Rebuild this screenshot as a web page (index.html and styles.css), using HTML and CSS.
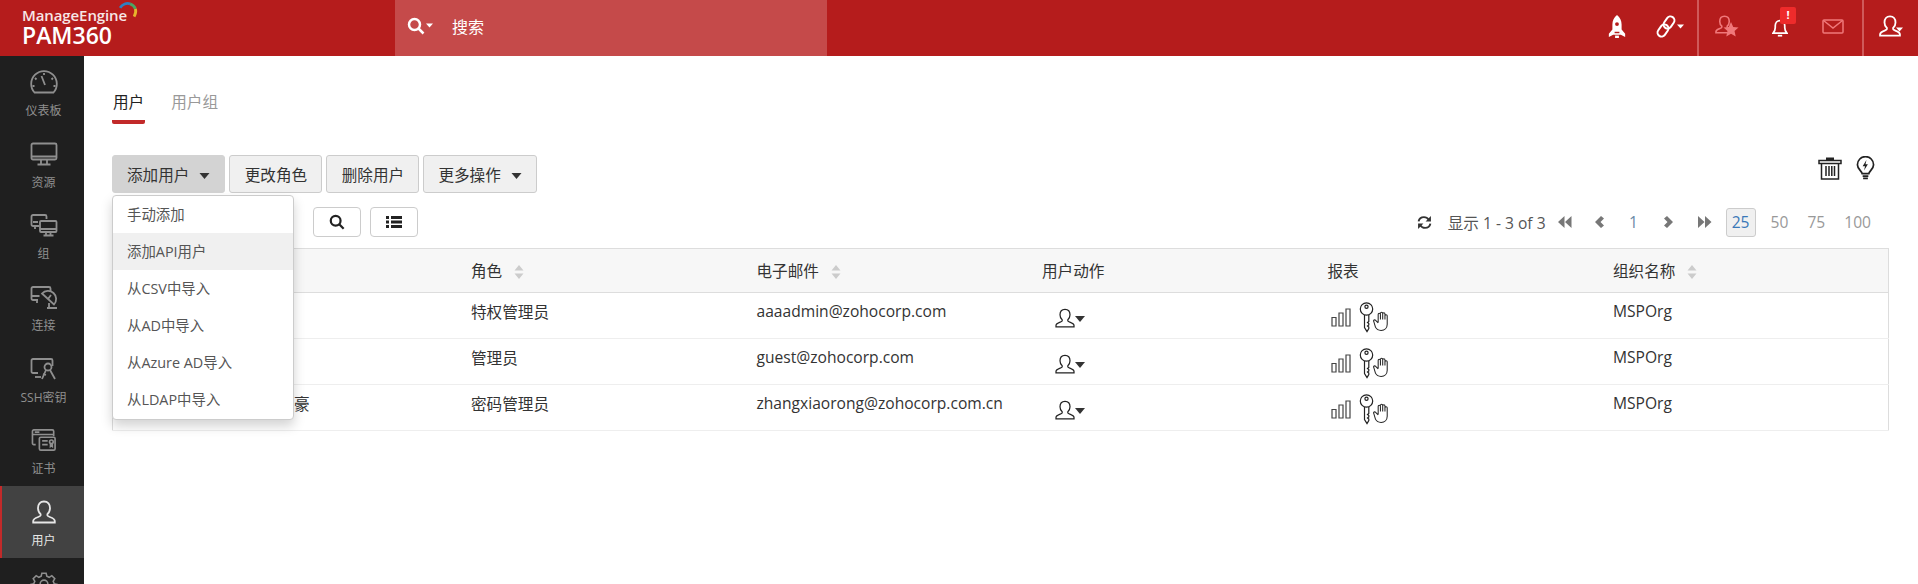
FILE: index.html
```html
<!DOCTYPE html>
<html lang="zh-CN">
<head>
  <meta charset="UTF-8">
  <title>PAM360 用户</title>
  <link rel="stylesheet" href="styles.css">
</head>
<body>
  <!-- Icon set -->
  <svg class="icon-defs" xmlns="http://www.w3.org/2000/svg">
    <symbol id="i-user" viewBox="0 0 24 24"><path d="M12 1.5c-3.9 0-6 2.900-6 6.600 0 2.800 1 4.700 2.600 6v1.500c0 1.300-7.400 1.900-7.400 5.400v1.500h21.600V21c0-3.500-7.400-4.100-7.400-5.400v-1.500c1.600-1.300 2.600-3.200 2.600-6 0-3.700-2.100-6.600-6-6.600z"/></symbol>
    <symbol id="i-caret" viewBox="0 0 10 6"><path class="solid" d="M0 0h10L5 6z"/></symbol>
    <symbol id="i-search" viewBox="0 0 18 18"><circle cx="7.5" cy="7.5" r="5.5"/><path d="M11.5 11.5l5 5"/></symbol>
    <symbol id="i-gauge" viewBox="0 0 28 24"><path d="M4.5 22.5A12.8 12.8 0 1 1 23.5 22.5z"/><path d="M11.5 6l3.500 9M14 3v2M5 8l1.500 1.500M23 8l-1.500 1.500M2.500 16h2M25.500 16h-2"/></symbol>
    <symbol id="i-monitor" viewBox="0 0 28 24"><rect x="1.5" y="1.5" width="25" height="16" rx="1.5"/><path d="M1.5 14.5h25M11 18v3.500M17 18v3.500M7.500 22.500h13"/></symbol>
    <symbol id="i-group" viewBox="0 0 28 24"><path d="M9 13H3a1.500 1.500 0 0 1-1.500-1.500v-8A1.500 1.500 0 0 1 3 2h12a1.500 1.500 0 0 1 1.500 1.500V6"/><path d="M3 9h5M5 13v3"/><rect x="10" y="8" width="16.5" height="11" rx="1"/><path d="M10 16h16.500M16 19v3M20.500 19v3M13.500 22.500h10"/></symbol>
    <symbol id="i-connect" viewBox="0 0 28 24"><path d="M8 15H3a1.500 1.500 0 0 1-1.500-1.500v-10A1.500 1.500 0 0 1 3 2h16a1.500 1.500 0 0 1 1.500 1.500V7"/><path d="M1.500 11h8M7 15v3"/><path class="dish" d="M12 8.500L24 19.500A8 8 0 0 0 12 8.500z"/><path d="M18 14l3-4M17 23h10M19 18v5"/></symbol>
    <symbol id="i-ssh" viewBox="0 0 28 24"><path d="M8 16H3a1.500 1.500 0 0 1-1.500-1.500v-11A1.500 1.500 0 0 1 3 2h18a1.500 1.500 0 0 1 1.500 1.500V9"/><path d="M5 20h6"/><circle cx="18" cy="10" r="3.5"/><path d="M16 13l-4 9M20 13l5 9M13 17l3 1"/></symbol>
    <symbol id="i-cert" viewBox="0 0 28 26"><path d="M5 18H3a1.500 1.500 0 0 1-1.500-1.500v-13A1.500 1.500 0 0 1 3 2h20a1.500 1.500 0 0 1 1.500 1.500V9"/><path d="M1.500 7h23M4 4.500h5"/><rect x="9" y="10" width="17" height="14" rx="1.5"/><path d="M12 14h6M12 18h6"/><circle cx="22" cy="15" r="2"/><path d="M21 17v3l1-.8 1 .8v-3"/></symbol>
    <symbol id="i-gear" viewBox="0 0 28 28"><path d="M11.500 1.500h5l.8 3.500 2.700 1.200 3.100-1.900 3.500 3.500-1.900 3.100 1.200 2.700 3.500.8v5l-3.500.8-1.200 2.700 1.900 3.100-3.500 3.500-3.100-1.900-2.700 1.200-.8 3.500h-5l-.8-3.500-2.700-1.200-3.100 1.900-3.500-3.500 1.900-3.100-1.200-2.700-3.500-.8v-5l3.500-.8 1.200-2.700-1.900-3.100 3.500-3.500 3.100 1.900 2.700-1.200z"/><circle cx="14" cy="14" r="4.5"/></symbol>
    <symbol id="i-rocket" viewBox="0 0 18 24"><path class="solid" d="M9 0c3.200 2.500 4.800 6 4.800 10v5l3.700 4.500V23l-4.500-2.500H5L.5 23v-3.500L4.200 15v-5C4.200 6 5.800 2.500 9 0z"/><circle class="hole" cx="9" cy="9.5" r="2"/><path class="hole" d="M6.500 17.500h5V19h-5z"/><path class="solid" d="M7 21.500h4V24H7z"/></symbol>
    <symbol id="i-link" viewBox="0 0 20 23"><rect x="9" y="1" width="8" height="13" rx="4" transform="rotate(35 13 7.500)"/><rect x="3" y="9" width="8" height="13" rx="4" transform="rotate(35 7 15.500)"/></symbol>
    <symbol id="i-star" viewBox="0 0 14 14"><path class="solid" d="M7 0l2.100 4.700 4.900.5-3.700 3.300 1.100 5L7 11l-4.400 2.500 1.100-5L0 5.200l4.900-.5z"/></symbol>
    <symbol id="i-bell" viewBox="0 0 18 22"><path d="M1 17.500h16c-1.500-1.500-2.500-3-2.500-6.500V9c0-3.500-2.300-6-5.500-6S3.500 5.500 3.500 9v2c0 3.500-1 5-2.500 6.500z"/><path d="M6.500 20.500h5"/></symbol>
    <symbol id="i-mail" viewBox="0 0 22 15"><rect x="1" y="1" width="20" height="13" rx="1"/><path d="M1.500 1.500L11 9l9.500-7.500"/></symbol>
    <symbol id="i-list" viewBox="0 0 16 14"><path class="solid" d="M0 1h3v3H0zM5 1h11v3H5zM0 5.500h3v3H0zM5 5.500h11v3H5zM0 10h3v3H0zM5 10h11v3H5z"/></symbol>
    <symbol id="i-trash" viewBox="0 0 24 24"><path d="M1 4.500h22V7.500H1zM3.500 7.500V23h17V7.500M8 10v10M11 10v10M13.800 10v10M16.500 10v10"/><path class="solid" d="M8 1.500h8v3H8z"/></symbol>
    <symbol id="i-bulb" viewBox="0 0 20 26"><path d="M6.500 18.500C6 15.500 1.500 13.500 1.500 9a8.500 8.500 0 0 1 17 0c0 4.500-4.500 6.500-5 9.500z"/><path d="M7 21h6M7.500 23.500h5"/><path class="solid" d="M11 4L7 10.500h2.500L8.500 15l4-6.500h-2.500z"/></symbol>
    <symbol id="i-refresh" viewBox="0 0 14 14"><path d="M1.500 6C2 3.500 4 2 6.500 2c2 0 3.500 1 4.500 2.500M12.500 8c-.5 2.500-2.500 4-5 4-2 0-3.500-1-4.500-2.500"/><path class="solid" d="M13 1v5H8zM1 13V8h5z"/></symbol>
    <symbol id="i-first" viewBox="0 0 14 12"><path class="solid" d="M6.500 0v12L0 6zM13.500 0v12L7 6z"/></symbol>
    <symbol id="i-prev" viewBox="0 0 9 12"><path class="solid" d="M6 0l3 2.500L5.500 6 9 9.500 6 12 0 6z"/></symbol>
    <symbol id="i-next" viewBox="0 0 9 12"><path class="solid" d="M3 0L0 2.500 3.500 6 0 9.500 3 12l6-6z"/></symbol>
    <symbol id="i-last" viewBox="0 0 14 12"><path class="solid" d="M0 0v12l6.500-6zM7 0v12l6.500-6z"/></symbol>
    <symbol id="i-sort" viewBox="0 0 10 14"><path class="solid" d="M5 0l4.500 5.500h-9zM5 14L.5 8.500h9z"/></symbol>
    <symbol id="i-bars" viewBox="0 0 20 19"><path d="M1 9.500h4V18H1zM8 5h4v13H8zM15 1h4v17h-4z"/></symbol>
    <symbol id="i-key" viewBox="0 0 15 31"><circle cx="7.5" cy="7" r="6.2"/><circle cx="7.5" cy="4.8" r="1.6"/><path d="M5.500 13v12.500l2.500 4 1.800-3v-1.500l-1.300-1 1.300-1v-1.500l-1.300-1 1.300-1V13"/></symbol>
    <symbol id="i-hand" viewBox="0 0 17 21"><path d="M5.500 12V3.500a1.200 1.200 0 0 1 2.400 0V9M7.900 2.500a1.200 1.200 0 0 1 2.400 0V9M10.300 3a1.200 1.200 0 0 1 2.400 0V9M12.700 5a1.200 1.200 0 0 1 2.400 0v9c0 3.800-2.600 6.500-6.500 6.500-3 0-5-1.500-6-3.500L.8 11c-.6-1.300 1-2.300 2-1.200l2.700 2.700"/></symbol>
  </svg>

  <!-- Top bar -->
  <header class="topbar">
    <div class="brand">
      <div class="brand-me">ManageEngine
        <svg class="brand-arc" viewBox="0 0 18 14">
          <path d="M1 5C3 1.500 7 .5 10 1.500" stroke="#2f7fc1"/>
          <path d="M10 1.500c2.500.8 4 2.500 4.800 4.500" stroke="#4aa564"/>
          <path d="M14.800 6c.6 2.200.2 4.500-1.200 7" stroke="#e8b32c"/>
        </svg>
      </div>
      <div class="brand-name">PAM360</div>
    </div>
    <div class="global-search">
      <svg class="ic search-ic"><use href="#i-search"/></svg>
      <svg class="ic tiny-caret"><use href="#i-caret"/></svg>
      <span class="search-label">搜索</span>
    </div>
    <div class="top-actions">
      <div class="top-cell"><svg class="ic rocket"><use href="#i-rocket"/></svg></div>
      <div class="top-cell"><svg class="ic link"><use href="#i-link"/></svg><svg class="ic tiny-caret"><use href="#i-caret"/></svg></div>
      <div class="top-sep"></div>
      <div class="top-cell wide dim">
        <svg class="ic top-user star-user"><use href="#i-user"/></svg>
        <svg class="ic star"><use href="#i-star"/></svg>
      </div>
      <div class="top-cell wide">
        <svg class="ic bell"><use href="#i-bell"/></svg>
        <span class="badge">!</span>
      </div>
      <div class="top-cell wide dim"><svg class="ic mail"><use href="#i-mail"/></svg></div>
      <div class="top-sep"></div>
      <div class="top-cell wide"><svg class="ic top-user"><use href="#i-user"/></svg><svg class="ic tiny-caret user-caret"><use href="#i-caret"/></svg></div>
    </div>
  </header>

  <div class="layout">
    <!-- Side menu -->
    <nav class="sidebar">
      <a class="side-item"><svg class="ic"><use href="#i-gauge"/></svg><span>仪表板</span></a>
      <a class="side-item"><svg class="ic"><use href="#i-monitor"/></svg><span>资源</span></a>
      <a class="side-item"><svg class="ic"><use href="#i-group"/></svg><span>组</span></a>
      <a class="side-item"><svg class="ic"><use href="#i-connect"/></svg><span>连接</span></a>
      <a class="side-item"><svg class="ic"><use href="#i-ssh"/></svg><span>SSH密钥</span></a>
      <a class="side-item"><svg class="ic"><use href="#i-cert"/></svg><span>证书</span></a>
      <a class="side-item active"><svg class="ic"><use href="#i-user"/></svg><span>用户</span></a>
      <a class="side-item"><svg class="ic"><use href="#i-gear"/></svg></a>
    </nav>

    <main class="content">
      <div class="tabs">
        <a class="tab active">用户</a>
        <a class="tab">用户组</a>
      </div>

      <div class="toolbar">
        <button class="btn open">添加用户<svg class="ic btn-caret"><use href="#i-caret"/></svg></button>
        <button class="btn">更改角色</button>
        <button class="btn">删除用户</button>
        <button class="btn">更多操作<svg class="ic btn-caret"><use href="#i-caret"/></svg></button>
        <div class="tool-icons">
          <svg class="ic trash"><use href="#i-trash"/></svg>
          <svg class="ic bulb"><use href="#i-bulb"/></svg>
        </div>
        <ul class="dropdown">
          <li>手动添加</li>
          <li class="hover">添加API用户</li>
          <li>从CSV中导入</li>
          <li>从AD中导入</li>
          <li>从Azure AD导入</li>
          <li>从LDAP中导入</li>
        </ul>
      </div>

      <div class="table-tools">
        <button class="btn-small"><svg class="ic"><use href="#i-search"/></svg></button>
        <button class="btn-small"><svg class="ic list"><use href="#i-list"/></svg></button>
        <div class="pager">
          <svg class="ic refresh"><use href="#i-refresh"/></svg>
          <span class="pager-text">显示 1 - 3 of 3</span>
          <svg class="ic pg first"><use href="#i-first"/></svg>
          <svg class="ic pg prev"><use href="#i-prev"/></svg>
          <span class="pg-num">1</span>
          <svg class="ic pg next"><use href="#i-next"/></svg>
          <svg class="ic pg last"><use href="#i-last"/></svg>
          <span class="size current">25</span>
          <span class="size">50</span>
          <span class="size">75</span>
          <span class="size">100</span>
        </div>
      </div>

      <table class="users">
        <thead>
          <tr>
            <th class="col-name"></th>
            <th>角色<svg class="ic sort"><use href="#i-sort"/></svg></th>
            <th>电子邮件<svg class="ic sort"><use href="#i-sort"/></svg></th>
            <th>用户动作</th>
            <th>报表</th>
            <th class="col-last">组织名称<svg class="ic sort"><use href="#i-sort"/></svg></th>
          </tr>
        </thead>
        <tbody>
          <tr>
            <td></td>
            <td>特权管理员</td>
            <td>aaaadmin@zohocorp.com</td>
            <td><div class="cell-icons"><svg class="ic act-user"><use href="#i-user"/></svg><svg class="ic act-caret"><use href="#i-caret"/></svg></div></td>
            <td><div class="cell-icons"><svg class="ic bars"><use href="#i-bars"/></svg><svg class="ic key"><use href="#i-key"/></svg><svg class="ic hand"><use href="#i-hand"/></svg></div></td>
            <td>MSPOrg</td>
          </tr>
          <tr>
            <td></td>
            <td>管理员</td>
            <td>guest@zohocorp.com</td>
            <td><div class="cell-icons"><svg class="ic act-user"><use href="#i-user"/></svg><svg class="ic act-caret"><use href="#i-caret"/></svg></div></td>
            <td><div class="cell-icons"><svg class="ic bars"><use href="#i-bars"/></svg><svg class="ic key"><use href="#i-key"/></svg><svg class="ic hand"><use href="#i-hand"/></svg></div></td>
            <td>MSPOrg</td>
          </tr>
          <tr>
            <td class="name-tail">豪</td>
            <td>密码管理员</td>
            <td>zhangxiaorong@zohocorp.com.cn</td>
            <td><div class="cell-icons"><svg class="ic act-user"><use href="#i-user"/></svg><svg class="ic act-caret"><use href="#i-caret"/></svg></div></td>
            <td><div class="cell-icons"><svg class="ic bars"><use href="#i-bars"/></svg><svg class="ic key"><use href="#i-key"/></svg><svg class="ic hand"><use href="#i-hand"/></svg></div></td>
            <td>MSPOrg</td>
          </tr>
        </tbody>
      </table>
    </main>
  </div>
</body>
</html>
```

FILE: styles.css
```css
* {
  box-sizing: border-box;
}

html, body {
  height: 100%;
}

body {
  margin: 0;
  overflow: hidden;
  background: #fff;
  color: #333;
  font-family: "Open Sans", "Noto Sans CJK SC", sans-serif;
  font-size: 14px;
}

.icon-defs {
  position: absolute;
  width: 0;
  height: 0;
}

.ic {
  display: inline-block;
  fill: none;
  stroke: currentColor;
  stroke-width: 1.5;
  flex: none;
}

.solid {
  fill: currentColor;
  stroke: none;
}

.hole {
  fill: #b51c1c;
  stroke: none;
}

.dish {
  fill: #1f1f1f;
}

/* Top bar */
.topbar {
  display: flex;
  height: 56px;
  background: #b51c1c;
  color: #fff;
}

.brand {
  width: 395px;
  padding: 7px 0 0 22px;
}

.brand-me {
  position: relative;
  width: 114px;
  font-size: 15px;
  line-height: 17px;
  font-weight: 600;
  letter-spacing: -0.1px;
  color: #f7e6e6;
}

.brand-arc {
  position: absolute;
  left: 97px;
  top: -5px;
  width: 20px;
  height: 16px;
  fill: none;
  stroke-width: 2.5;
}

.brand-name {
  margin-top: 1px;
  font-size: 23px;
  line-height: 20px;
  font-weight: 600;
}

.global-search {
  display: flex;
  align-items: center;
  width: 432px;
  padding: 0 0 5px 12px;
  background: #c54a4a;
}

.search-ic {
  width: 18px;
  height: 18px;
  stroke-width: 2.5;
}

.tiny-caret {
  width: 7px;
  height: 5px;
  margin-left: 1px;
}

.search-label {
  margin-left: 19px;
  font-size: 16px;
}

.top-actions {
  display: flex;
  margin-left: auto;
}

.top-cell {
  position: relative;
  display: flex;
  align-items: center;
  justify-content: center;
  width: 53px;
  height: 56px;
  padding-bottom: 4px;
}

.top-cell.wide {
  width: 54.33px;
}

.top-cell.dim {
  color: #f0787a;
}

.top-sep {
  width: 2px;
  background: #cf5a5a;
}

.rocket {
  width: 18px;
  height: 23px;
}

.link {
  width: 20px;
  height: 23px;
  stroke-width: 2;
}

.top-user {
  width: 22px;
  height: 22px;
  stroke-width: 2;
}

.star-user {
  width: 19px;
  height: 19px;
  margin: 0 3px 3px 0;
}

.star {
  position: absolute;
  left: 24px;
  top: 22px;
  width: 16px;
  height: 15px;
}

.bell {
  width: 16px;
  height: 19px;
  margin-top: 2px;
  stroke-width: 2;
}

.badge {
  position: absolute;
  left: 27px;
  top: 7px;
  width: 16px;
  height: 17px;
  border-radius: 2px;
  background: #ee2b2b;
  font-size: 11px;
  font-weight: 700;
  line-height: 15px;
  text-align: center;
}

.mail {
  width: 22px;
  height: 15px;
  margin-right: 4px;
}

.user-caret {
  margin: 6px 0 0 -5px;
}

/* Page */
.layout {
  display: flex;
  height: 528px;
}

.sidebar {
  width: 84px;
  background: #1f1f1f;
  color: #8f8f8f;
  overflow: hidden;
}

.side-item {
  display: flex;
  flex-direction: column;
  align-items: center;
  height: 71.67px;
  padding: 14px 0 0 3px;
  font-size: 12px;
  line-height: 16px;
}

.side-item .ic {
  width: 28px;
  height: 24px;
  margin-bottom: 9px;
  stroke-width: 1.8;
}

.side-item.active {
  background: #424242;
  border-left: 2px solid #c22a2a;
  color: #e6e6e6;
  padding-left: 1px;
}

.content {
  flex: 1;
  padding: 36px 29px 0 28px;
}

.tabs {
  display: flex;
  gap: 25px;
}

.tab {
  height: 32px;
  padding: 0 1px;
  font-size: 15.6px;
  line-height: 20px;
  color: #999;
}

.tab.active {
  color: #222;
  border-bottom: 4px solid #c22a2a;
  border-radius: 0 0 2px 2px;
}

.toolbar {
  position: relative;
  display: flex;
  gap: 4px;
  margin-top: 31px;
}

.btn {
  min-width: 93px;
  height: 38px;
  padding: 0 14px;
  border: 1px solid #ccc;
  border-radius: 3px;
  background: #f0f0f0;
  color: #333;
  font: inherit;
  font-size: 15.6px;
}

.btn.open {
  background: #d3d3d3;
  border-color: #d3d3d3;
}

.btn-caret {
  width: 11px;
  height: 6px;
  margin: 0 0 2px 10px;
  color: #333;
}

.tool-icons {
  display: flex;
  align-items: flex-start;
  gap: 14px;
  margin-left: auto;
  padding: 1px 14px 0 0;
  color: #222;
}

.trash {
  width: 24px;
  height: 24px;
}

.bulb {
  width: 19px;
  height: 25px;
  stroke-width: 1.8;
}

.dropdown {
  position: absolute;
  left: 0;
  top: 40px;
  width: 182px;
  height: 225px;
  margin: 0;
  padding: 0;
  list-style: none;
  background: #fff;
  border: 1px solid #ccc;
  border-radius: 4px;
  box-shadow: 0 6px 12px rgba(0, 0, 0, 0.175);
  color: #555;
  font-size: 14.4px;
}

.dropdown li {
  height: 37px;
  padding-left: 14px;
  line-height: 37px;
}

.dropdown .hover {
  background: #f0f0f0;
}

.table-tools {
  display: flex;
  align-items: center;
  height: 30px;
  margin-top: 14px;
  padding: 0 18px 0 201px;
}

.btn-small {
  display: flex;
  align-items: center;
  justify-content: center;
  width: 48px;
  height: 30px;
  margin-right: 9px;
  border: 1px solid #ccc;
  border-radius: 4px;
  background: #fff;
  color: #222;
}

.btn-small .ic {
  width: 16px;
  height: 16px;
  stroke-width: 2.5;
}

.btn-small .list {
  height: 14px;
}

.pager {
  display: flex;
  align-items: center;
  margin-left: auto;
  font-size: 15.6px;
  color: #555;
}

.refresh {
  width: 15px;
  height: 15px;
  margin-right: 16px;
  color: #333;
  stroke-width: 1.8;
}

.pager-text {
  margin-right: 12px;
}

.pg {
  height: 12px;
  color: #777;
}

.pg.first, .pg.last {
  width: 14px;
}

.pg.prev, .pg.next {
  width: 9px;
}

.pg.prev {
  margin-left: 23px;
}

.pg.next {
  margin-right: 25px;
}

.pg-num {
  width: 60px;
  text-align: center;
  color: #6b8aa8;
}

.size {
  margin-left: 19px;
  color: #999;
}

.size.current {
  width: 30px;
  height: 29px;
  margin-left: 14px;
  margin-right: -4px;
  border: 1px solid #ccc;
  border-radius: 3px;
  background: #f0f0f0;
  color: #3a78b8;
  line-height: 27px;
  text-align: center;
}

.users {
  width: 100%;
  margin-top: 11px;
  border: 1px solid #ddd;
  border-collapse: collapse;
  table-layout: fixed;
  font-size: 15.6px;
}

.users th {
  width: 285.5px;
  height: 44px;
  padding: 0 14px;
  background: #f7f7f7;
  border-bottom: 1px solid #ddd;
  font-weight: 400;
  text-align: left;
}

.users .col-name {
  width: 344.5px;
}

.users .col-last {
  width: auto;
}

.users td {
  height: 46px;
  padding: 7px 14px 0;
  border-bottom: 1px solid #eee;
  vertical-align: top;
  white-space: nowrap;
}

.sort {
  width: 10px;
  height: 14px;
  margin-left: 12px;
  vertical-align: -2px;
  color: #ccc;
}

.users td.name-tail {
  padding-left: 181px;
}

.cell-icons {
  display: flex;
  align-items: flex-start;
}

.act-user {
  width: 20px;
  height: 20px;
  margin: 8px 0 0 13px;
  color: #222;
}

.act-caret {
  width: 10px;
  height: 6px;
  margin-top: 16px;
  color: #333;
}

.bars {
  width: 20px;
  height: 19px;
  margin: 8px 8px 0 3px;
  color: #444;
  stroke-width: 1.2;
}

.key {
  width: 15px;
  height: 31px;
  margin-top: 2px;
  color: #222;
  stroke-width: 1.2;
}

.hand {
  width: 16px;
  height: 20px;
  margin: 11px 0 0 -1px;
  color: #222;
  stroke-width: 1.1;
}
```
